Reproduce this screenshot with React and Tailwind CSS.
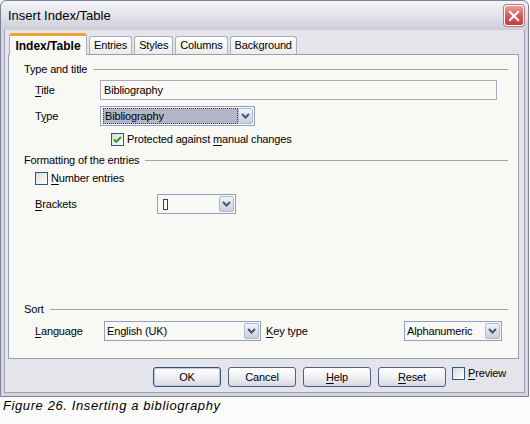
import React from 'react';

const Mn = ({ children }) => <span className="underline underline-offset-[2px] decoration-1">{children}</span>;

function DropBtn() {
  return (
    <div className="w-[15px] my-px mr-px rounded-[2px] border border-[#b3b9cf] bg-gradient-to-b from-[#f3f4f8] to-[#c9cddc] flex items-center justify-center">
      <svg width="9" height="6" viewBox="0 0 9 6"><path d="M1 1l3.5 3.5L8 1" stroke="#4a5577" strokeWidth="2" fill="none" /></svg>
    </div>
  );
}

function Select({ className, children }) {
  return (
    <div className={`h-[20px] border border-[#8ea3c2] bg-[#f8f8f5] flex items-stretch ${className}`}>
      <div className="flex-1 flex items-center pl-[2px] overflow-hidden">{children}</div>
      <DropBtn />
    </div>
  );
}

function Check({ checked }) {
  return (
    <div className="w-[13px] h-[13px] border border-[#2a5a85] bg-gradient-to-br from-[#dcdcd6] to-white flex items-center justify-center">
      {checked && (
        <svg width="9" height="9" viewBox="0 0 9 9"><path d="M1 4.5l2.3 2.3L8 2" stroke="#21a121" strokeWidth="2" fill="none" /></svg>
      )}
    </div>
  );
}

function Heading({ children }) {
  return (
    <div className="h-[14px] flex items-center gap-[6px]">
      <span>{children}</span>
      <div className="flex-1 h-px bg-[#a3a3a8]" />
    </div>
  );
}

function Btn({ children, primary }) {
  return (
    <div className={`w-[68px] h-[20px] rounded-[3px] border ${primary ? 'border-[#2f4f86]' : 'border-[#4c5f86]'} bg-gradient-to-b from-white via-[#f1f1f4] to-[#d6d6e0] flex items-center justify-center ${primary ? 'shadow-[inset_0_0_0_1px_#b9c8ea]' : ''}`}>
      {children}
    </div>
  );
}

const TABS = ['Entries', 'Styles', 'Columns', 'Background'];

export default function App() {
  return (
    <div className="w-[530px] h-[424px] bg-[#fbfbfb] text-[11px] tracking-[-0.15px] text-black leading-none" style={{ fontFamily: '"Liberation Sans", Arial, sans-serif' }}>
      <div className="w-[529px] h-[397px] border border-[#7f8399] rounded-t-[6px] bg-[#d4d5df] flex flex-col">
        {/* title bar */}
        <div className="h-[29px] flex items-center justify-between pl-[7px] pr-[4px] bg-gradient-to-b from-[#f4f4f7] via-[#e2e2ea] to-[#cdcdd8] rounded-t-[6px]">
          <span className="text-[13px] tracking-normal">Insert Index/Table</span>
          <div className="w-[20px] h-[21px] rounded-[3px] border border-white bg-gradient-to-b from-[#ec9e9c] via-[#d9585a] to-[#c23e41] flex items-center justify-center shadow-[0_0_0_1px_#b97a7a]">
            <svg width="12" height="12" viewBox="0 0 12 12"><path d="M2 2l8 8M10 2l-8 8" stroke="white" strokeWidth="2.2" strokeLinecap="square" /></svg>
          </div>
        </div>
        {/* body */}
        <div className="flex-1 mx-[3px] mb-[3px] border-x border-b border-[#9da1b5] bg-[#e4e4ea] flex flex-col">
          <div className="h-[24px] flex items-end pl-[4px] gap-[2px] relative z-10">
            <div className="h-[22px] -mb-px w-[78px] rounded-t-[3px] border-x border-[#a9adbf] border-t-[3px] border-t-[#f0a23a] bg-[#f8f8f5] flex items-center justify-center font-bold text-[12px] tracking-normal">
              Index/Table
            </div>
            {TABS.map((t) => (
              <div key={t} className="h-[18px] px-[4px] rounded-t-[3px] border-x border-t border-[#a9adbf] bg-gradient-to-b from-white to-[#ebebe8] flex items-center">
                {t}
              </div>
            ))}
          </div>
          {/* tab page */}
          <div className="ml-[3px] mr-[5px] h-[305px] border border-[#9a9eb3] bg-[#f8f8f5] flex flex-col pt-[7px] pb-[17px] pl-[15px] pr-[10px]">
            <Heading>Type and title</Heading>
            <div className="mt-[4px] ml-[11px] flex items-center">
              <span className="w-[65px]"><Mn>T</Mn>itle</span>
              <div className="w-[397px] h-[20px] border border-[#a8acb8] flex items-center pl-[3px]">Bibliography</div>
            </div>
            <div className="mt-[6px] ml-[11px] flex items-center">
              <span className="w-[65px]">T<Mn>y</Mn>pe</span>
              <Select className="w-[155px]">
                <div className="h-[16px] w-[135px] bg-[#b4b6c5] border border-dotted border-[#444] flex items-center pl-px">Bibliography</div>
              </Select>
            </div>
            <div className="mt-[7px] ml-[87px] flex items-center gap-[3px] h-[13px]">
              <Check checked />
              <span>Protected against <Mn>m</Mn>anual changes</span>
            </div>
            <div className="mt-[7px]"><Heading>Formatting of the entries</Heading></div>
            <div className="mt-[5px] ml-[11px] flex items-center gap-[3px] h-[13px]">
              <Check />
              <span><Mn>N</Mn>umber entries</span>
            </div>
            <div className="mt-[9px] ml-[11px] flex items-center">
              <span className="w-[122px]"><Mn>B</Mn>rackets</span>
              <Select className="w-[79px]">
                <div className="ml-[3px] w-[5px] h-[11px] border border-[#8a1f1f]" />
              </Select>
            </div>
            <div className="flex-1" />
            <Heading>Sort</Heading>
            <div className="mt-[5px] ml-[11px] flex items-center">
              <span className="w-[69px]"><Mn>L</Mn>anguage</span>
              <Select className="w-[157px]">English (UK)</Select>
              <span className="ml-[5px] w-[138px]"><Mn>K</Mn>ey type</span>
              <Select className="w-[98px]">Alphanumeric</Select>
            </div>
          </div>
          {/* buttons */}
          <div className="mt-[8px] pl-[148px] flex items-start gap-[7px]">
            <Btn primary>OK</Btn>
            <Btn>Cancel</Btn>
            <Btn><Mn>H</Mn>elp</Btn>
            <Btn><Mn>R</Mn>eset</Btn>
            <div className="flex items-start gap-[3px] ml-[-1px]">
              <Check />
              <span className="mt-px"><Mn>P</Mn>review</span>
            </div>
          </div>
        </div>
      </div>
      <div className="pl-[3px] pt-[2px] italic text-[13px] tracking-[0.6px]">Figure 26. Inserting a bibliography</div>
    </div>
  );
}
